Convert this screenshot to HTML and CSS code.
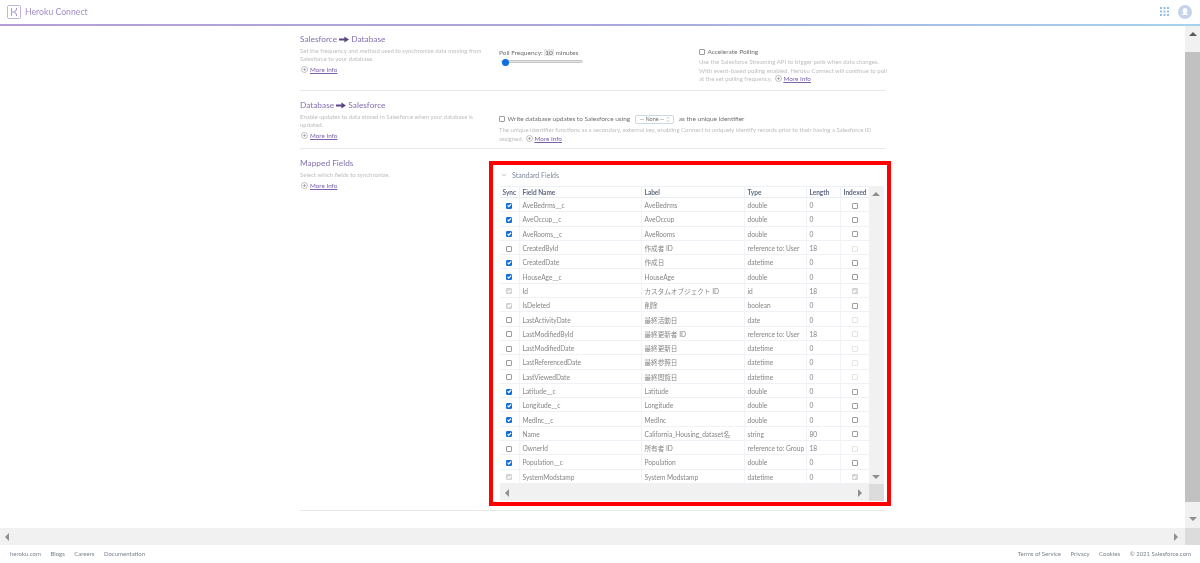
FILE: index.html
```html
<!DOCTYPE html>
<html lang="en">
<head>
<meta charset="utf-8">
<title>Heroku Connect</title>
<link rel="stylesheet" href="styles.css">
</head>
<body>
<svg class="defs" width="0" height="0" aria-hidden="true">
  <symbol id="plus" viewBox="0 0 8 8">
    <circle cx="4" cy="4" r="3.4" fill="none" stroke="#9a9aa2" stroke-width=".7"/>
    <path d="M4 2.2v3.6M2.2 4h3.6" stroke="#8a8a92" stroke-width=".7"/>
  </symbol>
  <symbol id="arrow" viewBox="0 0 12 8">
    <path d="M0 2.8h6.5V.4L12 4 6.5 7.6V5.2H0z" fill="#5b4585"/>
  </symbol>
</svg>
<header class="topbar">
  <div class="brand">
    <svg class="logo" viewBox="0 0 14 14"><rect x=".5" y=".5" width="13" height="13" rx="1.5" fill="none" stroke="#c3b3df"/><path d="M4.500 3v8M9.500 3v1.500L7.500 7H4.500M7.500 7l2 2.500V11" fill="none" stroke="#b09cd4" stroke-width="1.100"/></svg>
    <span class="brand-name">Heroku Connect</span>
  </div>
  <div class="top-actions">
    <svg class="apps" viewBox="0 0 9 9"><g fill="#8dbfe8"><rect width="2" height="2"/><rect x="3.5" width="2" height="2"/><rect x="7" width="2" height="2"/><rect y="3.5" width="2" height="2"/><rect x="3.5" y="3.5" width="2" height="2"/><rect x="7" y="3.5" width="2" height="2"/><rect y="7" width="2" height="2"/><rect x="3.5" y="7" width="2" height="2"/><rect x="7" y="7" width="2" height="2"/></g></svg>
    <svg class="avatar" viewBox="0 0 14 14"><circle cx="7" cy="7" r="7" fill="#c6d3e8"/><path d="M7 3c1.5 0 2.3 1 2.3 2.4S8.600 7.700 8.300 8.300c.2.600 1.700.900 2.200 1.700H3.500c.5-.8 2-1.100 2.200-1.700C5.400 7.700 4.700 6.800 4.700 5.400S5.500 3 7 3z" fill="#fff"/></svg>
  </div>
</header>
<div class="viewport">
  <main class="content">
    <section class="section sec-down">
      <div class="intro">
        <h2>Salesforce <svg class="h-arrow"><use href="#arrow"/></svg> Database</h2>
        <p>Set the frequency and method used to synchronize data moving from<br>Salesforce to your database.</p>
        <a class="more block" href="#"><svg class="plus"><use href="#plus"/></svg><span>More Info</span></a>
      </div>
      <div class="poll">
        <div class="poll-main">
          <div class="control-line">Poll Frequency: <span class="num">10</span> minutes</div>
          <input class="slider" type="range" min="10" max="60" value="10" aria-label="Poll Frequency">
        </div>
        <div class="poll-side">
          <label class="control-line"><input class="cb" type="checkbox"> Accelerate Polling</label>
          <p class="help">Use the Salesforce Streaming API to trigger polls when data changes.<br>With event-based polling enabled, Heroku Connect will continue to poll<br>at the set polling frequency. <a class="more" href="#"><svg class="plus"><use href="#plus"/></svg><span>More Info</span></a></p>
        </div>
      </div>
    </section>
    <section class="section sec-up">
      <div class="intro">
        <h2>Database <svg class="h-arrow"><use href="#arrow"/></svg> Salesforce</h2>
        <p>Enable updates to data stored in Salesforce when your database is<br>updated.</p>
        <a class="more block" href="#"><svg class="plus"><use href="#plus"/></svg><span>More Info</span></a>
      </div>
      <div class="write">
        <label class="control-line"><input class="cb" type="checkbox"> Write database updates to Salesforce using <span class="select">-- None -- <svg class="updown" viewBox="0 0 5 8"><path d="M.8 3 2.500 1.200 4.200 3M.8 5l1.700 1.800L4.200 5" fill="none" stroke="#8a8a8a" stroke-width=".6"/></svg></span> as the unique identifier</label>
        <p class="help">The unique identifier functions as a secondary, external key, enabling Connect to uniquely identify records prior to their having a Salesforce ID<br>assigned. <a class="more" href="#"><svg class="plus"><use href="#plus"/></svg><span>More Info</span></a></p>
      </div>
    </section>
    <section class="section sec-fields">
      <div class="intro">
        <h2>Mapped Fields</h2>
        <p>Select which fields to synchronize.</p>
        <a class="more block" href="#"><svg class="plus"><use href="#plus"/></svg><span>More Info</span></a>
      </div>
      <div class="fields-box">
        <div class="fields-title"><svg class="chev" viewBox="0 0 8 5"><path d="M1 1l3 3 3-3" fill="none" stroke="#8f9bb0" stroke-width=".8"/></svg>Standard Fields</div>
        <div class="scroller">
          <div class="scroller-row">
            <table class="grid">
              <colgroup><col class="c1"><col class="c2"><col class="c3"><col class="c4"><col class="c5"><col class="c6"></colgroup>
              <thead><tr><th>Sync</th><th>Field Name</th><th>Label</th><th>Type</th><th>Length</th><th>Indexed</th></tr></thead>
              <tbody>
                <tr><td class="ck"><input class="cb" type="checkbox" checked></td><td>AveBedrms__c</td><td>AveBedrms</td><td>double</td><td>0</td><td class="ck"><input class="cb" type="checkbox"></td></tr>
                <tr><td class="ck"><input class="cb" type="checkbox" checked></td><td>AveOccup__c</td><td>AveOccup</td><td>double</td><td>0</td><td class="ck"><input class="cb" type="checkbox"></td></tr>
                <tr><td class="ck"><input class="cb" type="checkbox" checked></td><td>AveRooms__c</td><td>AveRooms</td><td>double</td><td>0</td><td class="ck"><input class="cb" type="checkbox"></td></tr>
                <tr><td class="ck"><input class="cb" type="checkbox"></td><td>CreatedById</td><td>作成者 ID</td><td>reference to: User</td><td>18</td><td class="ck"><input class="cb" type="checkbox" disabled></td></tr>
                <tr><td class="ck"><input class="cb" type="checkbox" checked></td><td>CreatedDate</td><td>作成日</td><td>datetime</td><td>0</td><td class="ck"><input class="cb" type="checkbox"></td></tr>
                <tr><td class="ck"><input class="cb" type="checkbox" checked></td><td>HouseAge__c</td><td>HouseAge</td><td>double</td><td>0</td><td class="ck"><input class="cb" type="checkbox"></td></tr>
                <tr><td class="ck"><input class="cb" type="checkbox" checked disabled></td><td>Id</td><td>カスタムオブジェクト ID</td><td>id</td><td>18</td><td class="ck"><input class="cb" type="checkbox" checked disabled></td></tr>
                <tr><td class="ck"><input class="cb" type="checkbox" checked disabled></td><td>IsDeleted</td><td>削除</td><td>boolean</td><td>0</td><td class="ck"><input class="cb" type="checkbox"></td></tr>
                <tr><td class="ck"><input class="cb" type="checkbox"></td><td>LastActivityDate</td><td>最終活動日</td><td>date</td><td>0</td><td class="ck"><input class="cb" type="checkbox" disabled></td></tr>
                <tr><td class="ck"><input class="cb" type="checkbox"></td><td>LastModifiedById</td><td>最終更新者 ID</td><td>reference to: User</td><td>18</td><td class="ck"><input class="cb" type="checkbox" disabled></td></tr>
                <tr><td class="ck"><input class="cb" type="checkbox"></td><td>LastModifiedDate</td><td>最終更新日</td><td>datetime</td><td>0</td><td class="ck"><input class="cb" type="checkbox" disabled></td></tr>
                <tr><td class="ck"><input class="cb" type="checkbox"></td><td>LastReferencedDate</td><td>最終参照日</td><td>datetime</td><td>0</td><td class="ck"><input class="cb" type="checkbox" disabled></td></tr>
                <tr><td class="ck"><input class="cb" type="checkbox"></td><td>LastViewedDate</td><td>最終閲覧日</td><td>datetime</td><td>0</td><td class="ck"><input class="cb" type="checkbox" disabled></td></tr>
                <tr><td class="ck"><input class="cb" type="checkbox" checked></td><td>Latitude__c</td><td>Latitude</td><td>double</td><td>0</td><td class="ck"><input class="cb" type="checkbox"></td></tr>
                <tr><td class="ck"><input class="cb" type="checkbox" checked></td><td>Longitude__c</td><td>Longitude</td><td>double</td><td>0</td><td class="ck"><input class="cb" type="checkbox"></td></tr>
                <tr><td class="ck"><input class="cb" type="checkbox" checked></td><td>MedInc__c</td><td>MedInc</td><td>double</td><td>0</td><td class="ck"><input class="cb" type="checkbox"></td></tr>
                <tr><td class="ck"><input class="cb" type="checkbox" checked></td><td>Name</td><td>California_Housing_dataset名</td><td>string</td><td>80</td><td class="ck"><input class="cb" type="checkbox"></td></tr>
                <tr><td class="ck"><input class="cb" type="checkbox"></td><td>OwnerId</td><td>所有者 ID</td><td>reference to: Group</td><td>18</td><td class="ck"><input class="cb" type="checkbox" disabled></td></tr>
                <tr><td class="ck"><input class="cb" type="checkbox" checked></td><td>Population__c</td><td>Population</td><td>double</td><td>0</td><td class="ck"><input class="cb" type="checkbox"></td></tr>
                <tr><td class="ck"><input class="cb" type="checkbox" checked disabled></td><td>SystemModstamp</td><td>System Modstamp</td><td>datetime</td><td>0</td><td class="ck"><input class="cb" type="checkbox" checked disabled></td></tr>
              </tbody>
            </table>
            <div class="vbar inner-v"><span class="tri up"></span><span class="tri down"></span></div>
          </div>
          <div class="hbar inner-h"><span class="tri left"></span><span class="tri right"></span><span class="corner"></span></div>
        </div>
      </div>
    </section>
  </main>
  <div class="vbar page-v"><span class="tri up dark"></span><span class="thumb"></span><span class="tri down"></span></div>
</div>
<div class="hbar page-h"><span class="tri left"></span><span class="tri right"></span><span class="corner"></span></div>
<footer class="footer">
  <nav class="foot-left"><a href="#">heroku.com</a><a href="#">Blogs</a><a href="#">Careers</a><a href="#">Documentation</a></nav>
  <nav class="foot-right"><a href="#">Terms of Service</a><a href="#">Privacy</a><a href="#">Cookies</a><span>© 2021 Salesforce.com</span></nav>
</footer>
</body>
</html>
```
FILE: styles.css
```css
* { box-sizing: border-box; }
html { background: #fff; }
html, body { margin: 0; height: 563px; overflow: hidden; }
body {
  display: flex;
  flex-direction: column;
  background: #fff;
  font-family: Lato, "Noto Sans CJK JP", sans-serif;
  font-size: 6.5px;
  color: #8a8a8a;
  filter: blur(.3px);
}
.defs { position: absolute; }
a { color: inherit; }

.topbar {
  flex: 0 0 26px;
  display: flex;
  justify-content: space-between;
  align-items: center;
  padding: 0 8px 1px 7px;
  border-bottom: 2px solid;
  border-image: linear-gradient(90deg, #b49fd6, #a9a8de 50%, #a5d3ee) 1;
}
.brand { display: flex; align-items: center; gap: 4px; }
.logo { width: 14px; height: 14px; }
.brand-name { font-size: 8.700px; color: #a08ec6; }
.top-actions { display: flex; align-items: center; gap: 9px; }
.apps { width: 9px; height: 9px; }
.avatar { width: 14px; height: 14px; }

.viewport { flex: 0 0 502px; display: flex; }
.content { flex: 1; padding-left: 300px; min-width: 0; }

.section {
  width: 585px;
  display: grid;
  grid-template-columns: 199px 1fr;
  border-bottom: 1px solid #e8e8e8;
}
.sec-down { height: 65px; padding-top: 8px; }
.sec-up { height: 58px; padding-top: 9px; }
.sec-fields { height: 362px; padding-top: 12px; grid-template-columns: 189px 402px; }

.intro h2 {
  margin: 0;
  font-size: 8.300px;
  line-height: 11px;
  font-weight: 400;
  color: #8470b0;
}
.sec-fields .intro h2 { margin-top: -3px; }
.h-arrow { width: 10px; height: 7px; vertical-align: -0.5px; }
.intro p, .help {
  margin: 0;
  font-size: 6px;
  line-height: 8.500px;
  color: #bdbdbd;
  white-space: nowrap;
}
.intro p { margin-top: 1.500px; }
.more { color: #7d62ab; white-space: nowrap; }
.more span { text-decoration: underline; font-size: 6.300px; }
.more.block { display: flex; align-items: center; margin-top: 2px; }
.sec-fields .more.block { margin-top: 3px; }
.plus { width: 7px; height: 7px; margin: 0 2px 0 1px; vertical-align: -1px; }

.poll { display: grid; grid-template-columns: 200px 1fr; padding-top: 14px; }
.control-line { display: block; font-size: 6.500px; line-height: 9px; color: #6f6f6f; white-space: nowrap; }
.num { background: #e8e8e8; padding: 0 1px; }
.slider {
  -webkit-appearance: none;
  appearance: none;
  display: block;
  width: 82px;
  height: 7px;
  margin: 1px 0 0 2px;
  background: transparent;
}
.slider::-webkit-slider-runnable-track { height: 3px; background: #e2e2e2; border: .5px solid #c8c8c8; border-radius: 2px; }
.slider::-webkit-slider-thumb {
  -webkit-appearance: none;
  width: 7px;
  height: 7px;
  margin-top: -2.500px;
  border-radius: 50%;
  background: #0a6fe0;
}
.poll-side { margin-top: -1px; }
.poll-side .help { margin-top: 2px; }
.cb {
  -webkit-appearance: none;
  appearance: none;
  display: inline-block;
  position: relative;
  width: 6px;
  height: 6px;
  margin: 0 1px 0 0;
  vertical-align: -0.5px;
  border: 1px solid #9c9c9c;
  border-radius: 1px;
  background: #fff;
}
.cb:checked { background: #1170d8; border-color: #1170d8; }
.cb:checked::after {
  content: "";
  position: absolute;
  inset: -1px;
  background: #fff;
  clip-path: polygon(15% 52%, 30% 38%, 42% 52%, 72% 18%, 88% 32%, 42% 82%);
}
.cb:disabled { border-color: #e4e4e4; }
.cb:disabled:checked { background: #d8d8d8; border-color: #d0d0d0; }
.write { padding-top: 14px; }
.write .help { margin-top: 2px; }
.select {
  display: inline-flex;
  align-items: center;
  gap: 2px;
  height: 9px;
  margin: 0 3px;
  padding: 0 3px 0 4px;
  border: .6px solid #cfd8e6;
  border-radius: 2px;
  font-size: 5.500px;
}
.updown { width: 4px; height: 7px; }

.fields-box {
  height: 345px;
  border: 4px solid #f00;
  padding: 2px 7px 0;
}
.fields-title {
  display: flex;
  align-items: center;
  height: 15px;
  gap: 5px;
  padding-left: 1px;
  font-size: 7px;
  color: #7f8a9e;
}
.chev { width: 6px; height: 4px; }
.scroller { margin-top: 4px; width: 384px; }
.scroller-row { display: flex; height: 298px; }
.grid {
  width: 368.500px;
  height: 298px;
  table-layout: fixed;
  border-collapse: separate;
  border-spacing: 0;
  flex: none;
}
.c1 { width: 19.500px; } .c2 { width: 122px; } .c3 { width: 103px; }
.c4 { width: 62px; } .c5 { width: 34px; } .c6 { width: 28px; }
.grid th {
  height: 12px;
  padding: 0 0 0 3px;
  text-align: left;
  font-weight: 700;
  font-size: 6.500px;
  color: #5d6880;
  border-top: 1px solid #edf1f7;
  border-bottom: 1px solid #e8edf5;
  border-right: 1px solid #edf1f7;
  white-space: nowrap;
  overflow: hidden;
}
.grid th:first-child { padding-left: 2.500px; }
.grid th:last-child { border-right: 0; }
.grid td {
  height: 14.300px;
  padding: 1px 0 0 3px;
  font-size: 6.600px;
  line-height: 8px;
  color: #858585;
  border-bottom: 1px solid #eef1f6;
  border-right: 1px solid #f0f3f8;
  white-space: nowrap;
  overflow: hidden;
}
.grid td:last-child { border-right: 0; }
.grid td.ck { padding: 1px 0 0; text-align: center; }
.grid td.ck .cb { margin: 0; }

.vbar {
  display: flex;
  flex-direction: column;
  align-items: center;
  justify-content: space-between;
  background: #f1f1f1;
}
.inner-v { width: 15.500px; padding: 6px 0 5px; }
.page-v { flex: 0 0 15px; padding: 6px 0 7px; }
.thumb { width: 15px; height: 450px; background: #c1c1c1; }
.hbar { display: flex; align-items: center; background: #f1f1f1; }
.inner-h { height: 17px; padding-left: 5px; }
.page-h { flex: 0 0 17px; padding-left: 5px; }
.corner { align-self: stretch; width: 15px; background: #dcdcdc; flex: none; }
.tri { width: 0; height: 0; flex: none; border-style: solid; border-color: transparent; }
.tri.up { border-width: 0 4px 4px; border-bottom-color: #8f8f8f; }
.tri.up.dark { border-bottom-color: #5a5a5a; }
.tri.down { border-width: 4px 4px 0; border-top-color: #8f8f8f; }
.tri.left { border-width: 4px 4px 4px 0; border-right-color: #8f8f8f; }
.tri.right { border-width: 4px 0 4px 4px; border-left-color: #8f8f8f; margin-left: auto; margin-right: 7px; }

.footer {
  flex: 1;
  display: flex;
  justify-content: space-between;
  align-items: center;
  padding: 0 9px 2px 10px;
  font-size: 6px;
  color: #7a8290;
}
.footer a { text-decoration: none; }
.footer nav { display: flex; gap: 9.500px; }
```
